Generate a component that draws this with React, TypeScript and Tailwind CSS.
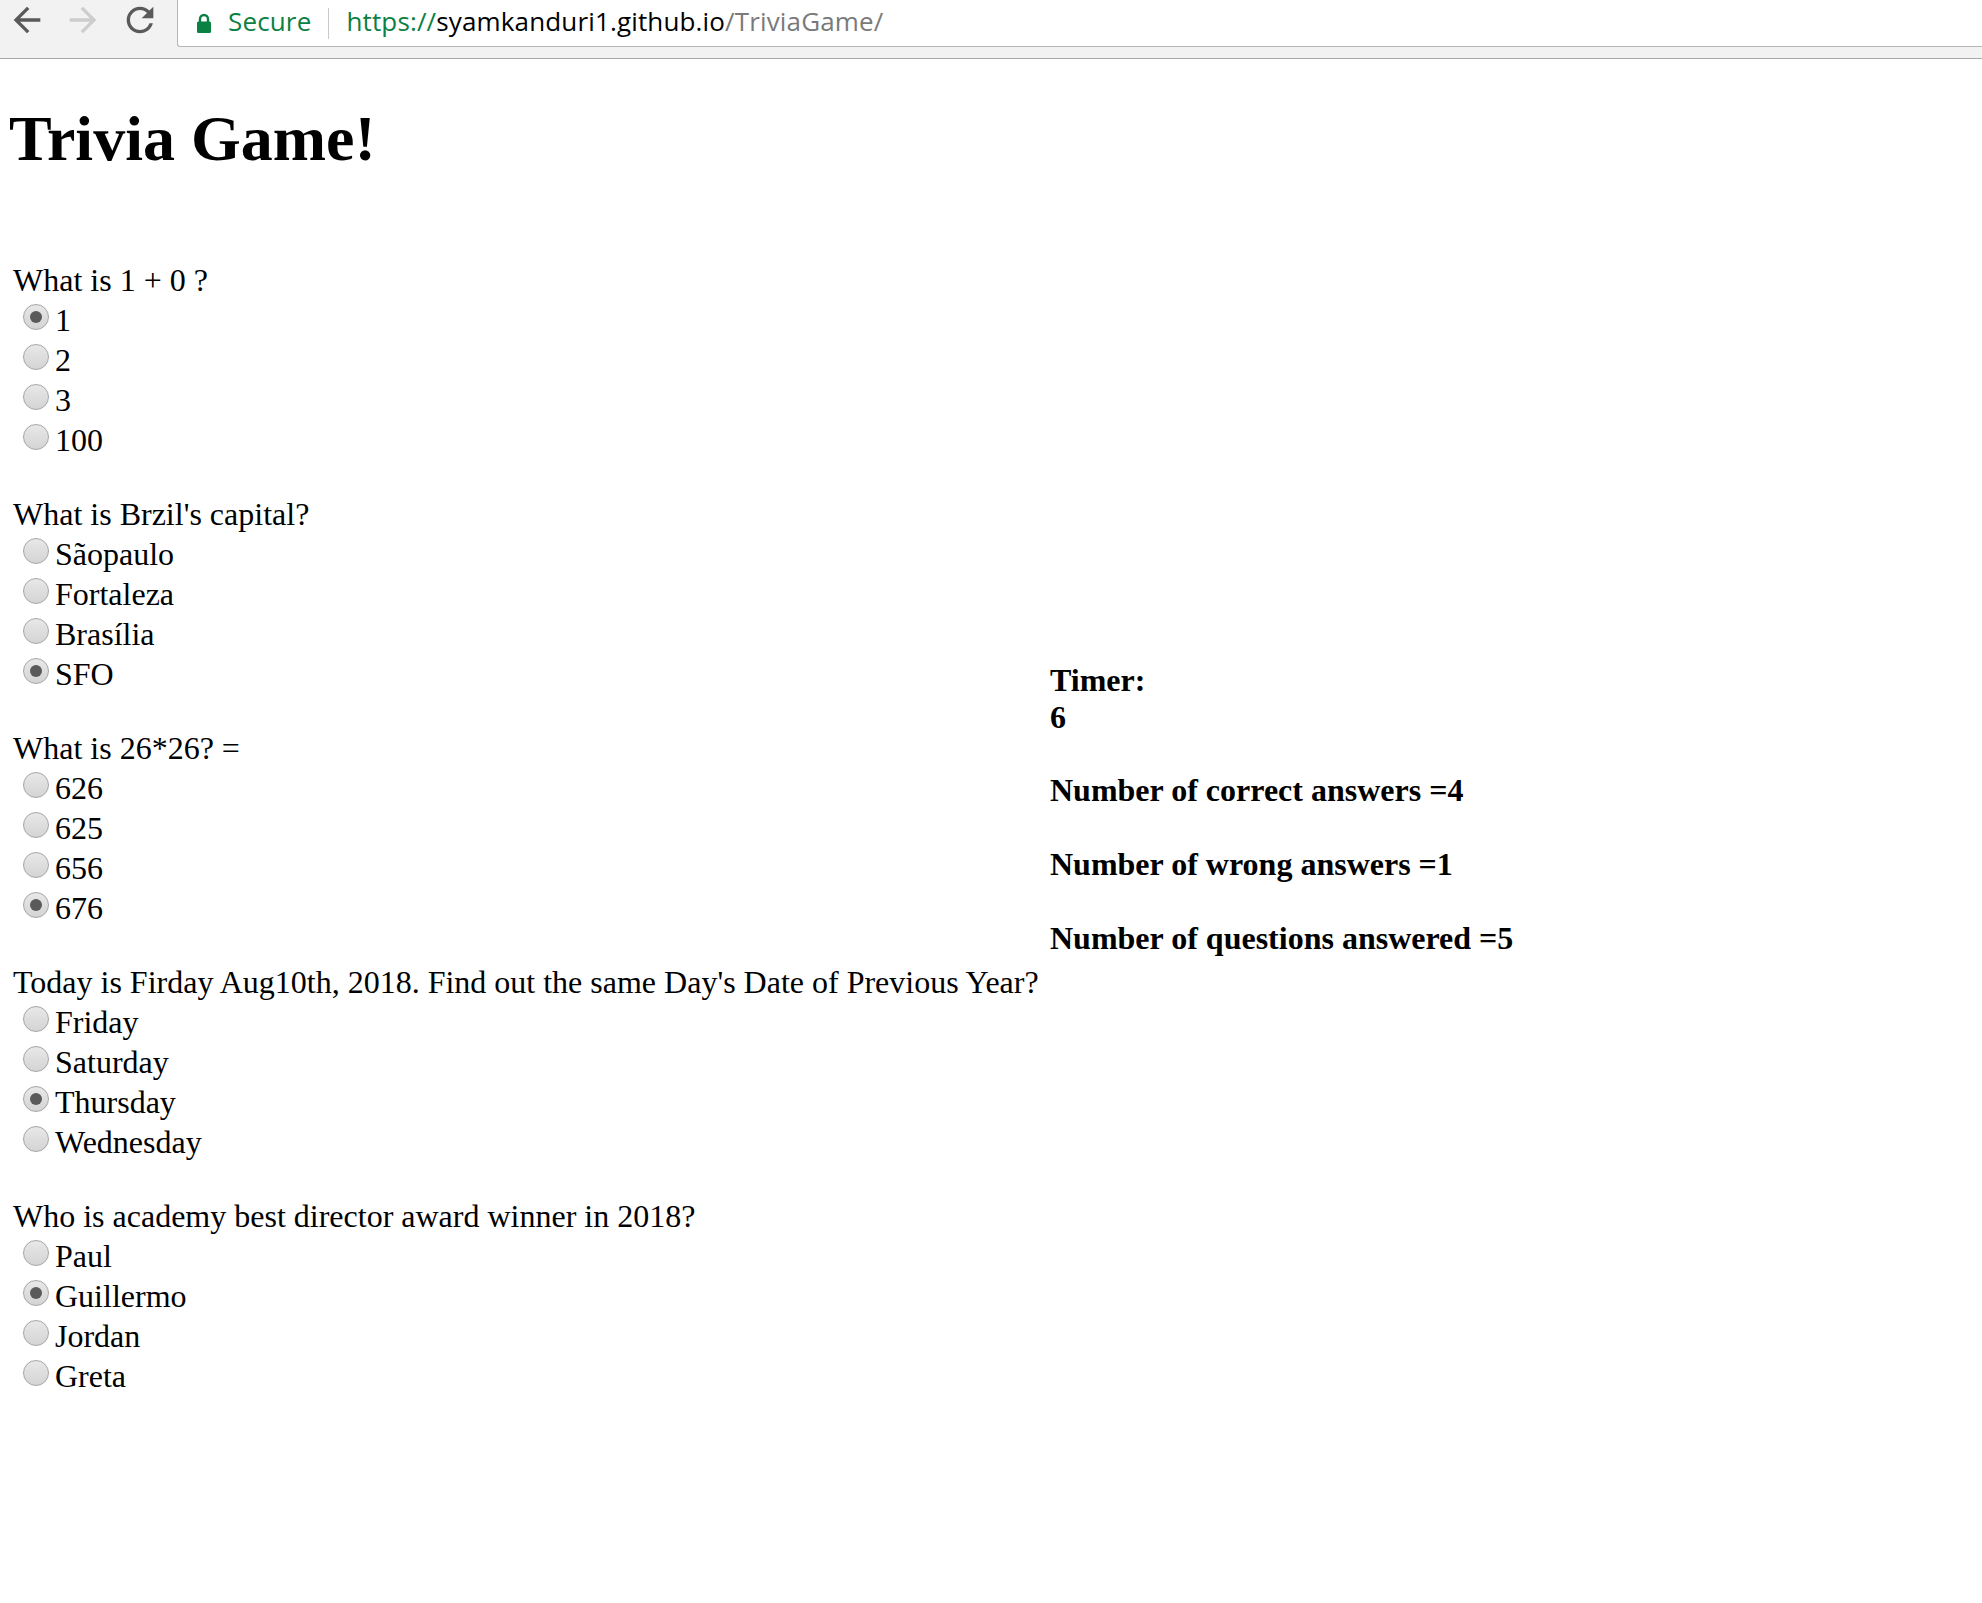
import React from 'react';

type Question = {
  text: string;
  options: string[];
  picked: number;
};

const questions: Question[] = [
  { text: 'What is 1 + 0 ?', options: ['1', '2', '3', '100'], picked: 0 },
  { text: "What is Brzil's capital?", options: ['Sãopaulo', 'Fortaleza', 'Brasília', 'SFO'], picked: 3 },
  { text: 'What is 26*26? =', options: ['626', '625', '656', '676'], picked: 3 },
  {
    text: "Today is Firday Aug10th, 2018. Find out the same Day's Date of Previous Year?",
    options: ['Friday', 'Saturday', 'Thursday', 'Wednesday'],
    picked: 2,
  },
  {
    text: 'Who is academy best director award winner in 2018?',
    options: ['Paul', 'Guillermo', 'Jordan', 'Greta'],
    picked: 1,
  },
];

function Radio({ checked }: { checked: boolean }) {
  return (
    <span className="relative inline-block align-baseline w-[26px] h-[26px] ml-[10px] mr-[6px] mb-[1px] rounded-full border border-[#a6a6a6] bg-linear-to-b from-[#e8e8e8] to-[#d4d4d4]">
      {checked && (
        <span className="absolute left-1/2 top-1/2 -translate-x-1/2 -translate-y-1/2 w-[12px] h-[12px] rounded-full bg-[#5a5a5a]" />
      )}
    </span>
  );
}

function BrowserBar() {
  return (
    <header className="h-[59px] flex bg-[#f2f2f2] border-b border-[#a9a9a9]">
      <div className="w-[177px] flex items-start pl-[7px] gap-[16px]">
        {/* back */}
        <svg width="40" height="40" viewBox="0 0 24 24" fill="#5a5a5a">
          <path d="M20 11H7.83l5.59-5.59L12 4l-8 8 8 8 1.41-1.41L7.83 13H20v-2z" />
        </svg>
        {/* forward */}
        <svg width="40" height="40" viewBox="0 0 24 24" fill="#cdcdcd">
          <path d="M4 11h12.17l-5.59-5.59L12 4l8 8-8 8-1.41-1.41L16.17 13H4v-2z" />
        </svg>
        {/* reload */}
        <svg width="40" height="40" viewBox="0 0 24 24" fill="#5a5a5a" className="ml-[1px]">
          <path d="M17.65 6.35A7.958 7.958 0 0 0 12 4c-4.42 0-7.99 3.58-7.99 8s3.57 8 7.99 8c3.73 0 6.84-2.55 7.73-6h-2.08A5.99 5.99 0 0 1 12 18c-3.31 0-6-2.69-6-6s2.69-6 6-6c1.66 0 3.14.69 4.22 1.78L13 11h7V4l-2.35 2.35z" />
        </svg>
      </div>
      <div className="flex-1 h-[47px] bg-white border-l border-b border-[#b5b5b5] rounded-bl-[3px] flex items-center pl-[18px] pb-[3px] font-['Open_Sans',sans-serif] text-[26px] tracking-[0.15px] whitespace-nowrap">
        <svg width="16" height="20" viewBox="0 0 16 20" className="mt-[2px]">
          <path d="M4 9V6a4 4 0 0 1 8 0v3" fill="none" stroke="#0b8043" strokeWidth="2.4" />
          <rect x="1" y="8.5" width="14" height="11.5" rx="1.5" fill="#0b8043" />
        </svg>
        <span className="ml-[16px] text-[#0b8043]">Secure</span>
        <span className="ml-[17px] w-px h-[31px] bg-[#c9c9c9] mt-[3px]" />
        <span className="ml-[17px]">
          <span className="text-[#0b8043]">https://</span>
          <span className="text-black">syamkanduri1.github.io</span>
          <span className="text-[#7a7a7a]">/TriviaGame/</span>
        </span>
      </div>
    </header>
  );
}

export default function App() {
  return (
    <div className="min-h-screen bg-white text-black font-['Liberation_Serif','Times_New_Roman',serif]">
      <BrowserBar />
      <main className="pl-[9px]">
        <h1 className="mt-[43px] text-[64px] font-bold leading-[74px]">Trivia Game!</h1>

        <div className="flex mt-[84px]">
          {/* Questions */}
          <div className="w-[1041px] pl-[4px] text-[32px]">
            {questions.map((q) => (
              <div key={q.text} className="mb-[34px]">
                <div className="h-[40px] leading-[40px] whitespace-nowrap">{q.text}</div>
                {q.options.map((opt, i) => (
                  <div key={opt} className="h-[40px] leading-[40px] whitespace-nowrap">
                    <Radio checked={i === q.picked} />
                    {opt}
                  </div>
                ))}
              </div>
            ))}
          </div>

          {/* Score panel */}
          <div className="mt-[402px] text-[32px] font-bold leading-[36.8px] whitespace-nowrap">
            <div>Timer:</div>
            <div>6</div>
            <div className="mt-[36.8px]">Number of correct answers =4</div>
            <div className="mt-[36.8px]">Number of wrong answers =1</div>
            <div className="mt-[36.8px]">Number of questions answered =5</div>
          </div>
        </div>
      </main>
    </div>
  );
}
